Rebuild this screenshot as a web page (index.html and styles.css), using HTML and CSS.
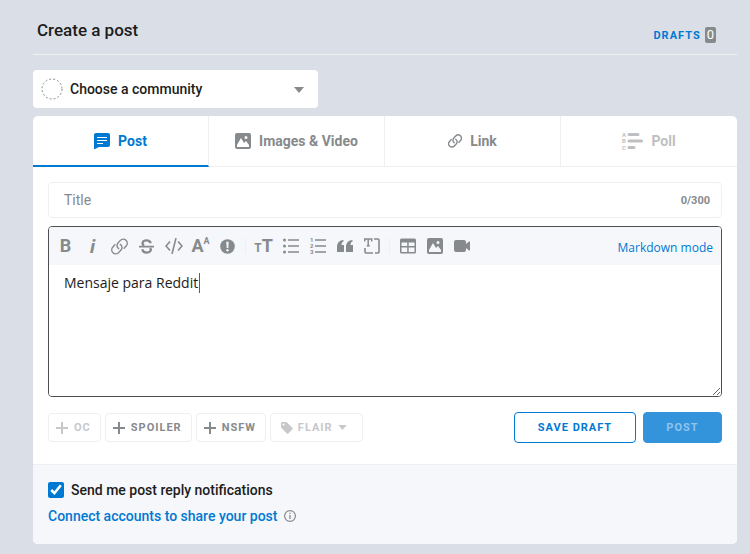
FILE: index.html
```html
<!DOCTYPE html>
<html lang="en">
<head>
    <meta charset="UTF-8">
    <meta name="viewport" content="width=device-width, initial-scale=1.0">
    <title>Create a post</title>
    <link rel="stylesheet" href="styles.css">
</head>
<body>

    <header class="header">
        <h1>Create a post</h1>
        <button class="drafts">DRAFTS <span class="count">0</span></button>
    </header>

    <div class="community">
        <svg class="community-icon" width="22" height="22" viewBox="0 0 22 22"><circle cx="11" cy="11" r="10" fill="none" stroke="#878a8c" stroke-dasharray="2 2"/></svg>
        <select aria-label="Choose a community">
            <option>Choose a community</option>
        </select>
        <svg class="arrow" width="10" height="6" viewBox="0 0 10 6"><path d="M0 0h10L5 6z"/></svg>
    </div>

    <main class="card">
        <nav class="tabs">
            <button class="tab active">
                <svg width="16" height="16" viewBox="0 0 16 16"><path fill="currentColor" d="M2 0h12a2 2 0 0 1 2 2v10a2 2 0 0 1-2 2H5l-4 2H0V2a2 2 0 0 1 2-2z"/><path stroke="#fff" d="M3 4.5h10M3 7.5h10M3 10.5h6"/></svg>
                Post
            </button>
            <button class="tab">
                <svg width="16" height="16" viewBox="0 0 16 16"><path fill="currentColor" fill-rule="evenodd" d="M2 0h12a2 2 0 0 1 2 2v12a2 2 0 0 1-2 2H2a2 2 0 0 1-2-2V2a2 2 0 0 1 2-2zM2 14h12v-2l-3-4-2 2-3-5-4 7zM11 3a1.5 1.5 0 1 0 0 3 1.5 1.5 0 0 0 0-3z"/></svg>
                Images &amp; Video
            </button>
            <button class="tab">
                <svg width="14" height="14" viewBox="0 0 20 20" fill="none" stroke="currentColor" stroke-width="2" stroke-linecap="round"><path d="M9 12.5C6.5 11 6.5 7.5 8.5 5.5l2.5-2.7a4.7 4.7 0 0 1 6.8 6.5L15.5 12"/><path d="M11 7.5c2.5 1.5 2.5 5 .5 7L9 17.2a4.7 4.7 0 0 1-6.8-6.5L4.5 8"/></svg>
                Link
            </button>
            <button class="tab" disabled>
                <svg width="21" height="18" viewBox="0 0 21 18"><path stroke="currentColor" stroke-width="3" stroke-linecap="round" d="M7 2.5h9M7 9h12.5M7 15.5h5"/><g fill="currentColor" class="tiny"><text x="0" y="5">A</text><text x="0" y="11">B</text><text x="0" y="18">C</text></g></svg>
                Poll
            </button>
        </nav>

        <div class="content">
            <div class="title-box">
                <input type="text" id="title" placeholder="Title" aria-label="Title" maxlength="300">
                <span class="counter" id="counter">0/300</span>
            </div>

            <div class="editor">
                <div class="toolbar">
                    <button class="tool" aria-label="Bold"><b>B</b></button>
                    <button class="tool italic" aria-label="Italics"><b>i</b></button>
                    <button class="tool" aria-label="Link"><svg width="17" height="17" viewBox="0 0 20 20" fill="none" stroke="currentColor" stroke-width="1.7" stroke-linecap="round"><path d="M9 12.5C6.5 11 6.5 7.5 8.5 5.5l2.5-2.7a4.7 4.7 0 0 1 6.8 6.5L15.5 12"/><path d="M11 7.5c2.5 1.5 2.5 5 .5 7L9 17.2a4.7 4.7 0 0 1-6.8-6.5L4.5 8"/></svg></button>
                    <button class="tool" aria-label="Strikethrough"><svg width="15" height="15" viewBox="0 0 16 16" fill="none" stroke="currentColor" stroke-width="2.4"><path d="M12.5 4.5C12 2.5 10.5 1.5 8 1.5c-4.5 0-5.5 4-2.5 5.5M3.5 11c.5 2.5 2 3.5 4.5 3.5 4 0 5.5-2.5 4-5"/><path d="M0 8.2h16" stroke-width="1.8"/></svg></button>
                    <button class="tool" aria-label="Inline code"><svg width="18" height="16" viewBox="0 0 18 16" fill="none" stroke="currentColor" stroke-width="1.6"><path d="M5 3.5L1 8l4 4.5M13 3.5L17 8l-4 4.5M11 0L7 16"/></svg></button>
                    <button class="tool" aria-label="Superscript"><b>A</b><span class="raised">A</span></button>
                    <button class="tool" aria-label="Spoiler"><svg width="15" height="15" viewBox="0 0 15 15"><circle cx="7.5" cy="7.5" r="7.3" fill="currentColor"/><path fill="#f5f7fa" d="M6.3 2.8h2.4L8.3 9H6.7z"/><circle cx="7.5" cy="11.3" r="1.2" fill="#f5f7fa"/></svg></button>
                    <span class="separator"></span>
                    <button class="tool" aria-label="Heading"><b class="small-t">T</b><b>T</b></button>
                    <button class="tool" aria-label="Bulleted list"><svg width="16" height="16" viewBox="0 0 16 16"><path stroke="currentColor" stroke-width="1.5" d="M5 2h11M5 8h11M5 14h11"/><g fill="currentColor"><circle cx="1.5" cy="2" r="1.5"/><circle cx="1.5" cy="8" r="1.5"/><circle cx="1.5" cy="14" r="1.5"/></g></svg></button>
                    <button class="tool" aria-label="Numbered list"><svg width="16" height="18" viewBox="0 0 16 18"><path stroke="currentColor" stroke-width="1.5" d="M5 3h11M5 9h11M5 15h11"/><g fill="currentColor" class="tiny"><text x="0" y="5">1</text><text x="0" y="11">2</text><text x="0" y="17">3</text></g></svg></button>
                    <button class="tool" aria-label="Quote block"><svg width="16" height="12" viewBox="0 0 16 12"><g fill="currentColor"><path d="M6.5 0v1.5C5 2 4.5 3.5 4.5 5H7v7H0V7c0-4 2.5-7 6.5-7z"/><path d="M15.5 0v1.5C14 2 13.5 3.5 13.5 5H16v7H9V7c0-4 2.5-7 6.5-7z"/></g></svg></button>
                    <button class="tool" aria-label="Code block"><svg width="16" height="16" viewBox="0 0 16 16" fill="none" stroke="currentColor"><path stroke-width="1.6" d="M10 1h4a1 1 0 0 1 1 1v12a1 1 0 0 1-1 1h-3M9 15H2a1 1 0 0 1-1-1v-4"/><path stroke-width="1.5" d="M.7 3.5V1h7v2.5M4.2 1v7M2.7 7.7h3"/></svg></button>
                    <span class="separator"></span>
                    <button class="tool" aria-label="Table"><svg width="16" height="16" viewBox="0 0 16 16"><path fill="currentColor" fill-rule="evenodd" d="M1.5.5h13A1.5 1.5 0 0 1 16 2v12a1.5 1.5 0 0 1-1.5 1.5h-13A1.5 1.5 0 0 1 0 14V2A1.5 1.5 0 0 1 1.5.5zM1.5 4.5V8h5.700V4.5zm7.2 0V8h5.800V4.5zM1.5 9.5V14h5.700V9.5zm7.2 0V14h5.800V9.5z"/></svg></button>
                    <button class="tool" aria-label="Add an image"><svg width="16" height="16" viewBox="0 0 16 16"><path fill="currentColor" fill-rule="evenodd" d="M2 0h12a2 2 0 0 1 2 2v12a2 2 0 0 1-2 2H2a2 2 0 0 1-2-2V2a2 2 0 0 1 2-2zM2 14h12v-2l-3-4-2 2-3-5-4 7zM11 3a1.5 1.5 0 1 0 0 3 1.5 1.5 0 0 0 0-3z"/></svg></button>
                    <button class="tool" aria-label="Add a video"><svg width="16" height="12" viewBox="0 0 16 12"><path fill="currentColor" d="M2 0h8a2 2 0 0 1 2 2v2l3-2.5h1v9h-1L12 8v2a2 2 0 0 1-2 2H2a2 2 0 0 1-2-2V2a2 2 0 0 1 2-2z"/></svg></button>
                    <button class="markdown">Markdown mode</button>
                </div>
                <div class="message">
                    <textarea id="message" aria-label="Text" spellcheck="false">Mensaje para Reddit</textarea>
                    <span class="caret"></span>
                </div>
            </div>

            <div class="actions">
                <button class="flag" disabled><svg width="12" height="12" viewBox="0 0 12 12"><path d="M6 0v12M0 6h12"/></svg>OC</button>
                <button class="flag"><svg width="12" height="12" viewBox="0 0 12 12"><path d="M6 0v12M0 6h12"/></svg>SPOILER</button>
                <button class="flag"><svg width="12" height="12" viewBox="0 0 12 12"><path d="M6 0v12M0 6h12"/></svg>NSFW</button>
                <button class="flag flair" disabled>
                    <svg width="12" height="12" viewBox="0 0 12 12"><path class="solid" fill-rule="evenodd" d="M1 0h4.5L11.5 6a1 1 0 0 1 0 1.2L7.2 11.5a1 1 0 0 1-1.2 0L0 5.5V1a1 1 0 0 1 1-1zM2.5 1.5a1 1 0 1 0 0 2 1 1 0 0 0 0-2z"/></svg>FLAIR
                    <svg width="9" height="5" viewBox="0 0 10 6"><path class="solid" d="M0 0h10L5 6z"/></svg>
                </button>
                <button class="save">SAVE DRAFT</button>
                <button class="post" disabled>POST</button>
            </div>
        </div>

        <footer class="footer">
            <label class="notify"><input type="checkbox" checked>Send me post reply notifications</label>
            <div class="connect">
                <a href="#">Connect accounts to share your post</a>
                <svg width="12" height="12" viewBox="0 0 12 12"><circle cx="6" cy="6" r="5.4" fill="none" stroke="#878a8c" stroke-width="1.2"/><path stroke="#878a8c" stroke-width="1.3" d="M6 5v4M6 2.7V4"/></svg>
            </div>
        </footer>
    </main>

    <script>
        let title = document.getElementById("title");

        title.addEventListener("input", function () {
            document.getElementById("counter").textContent = title.value.length + "/300";
        });
    </script>

</body>
</html>
```
FILE: styles.css
```css
* { box-sizing: border-box; }
body { margin: 0; padding: 8px 13px 10px 33px; background: #dadfe7; color: #1c1c1c; font-family: Roboto, "Noto Sans", sans-serif; font-size: 14px; }
button { font-family: inherit; padding: 0; border: none; background: none; color: #878a8c; cursor: pointer; }
button:disabled { cursor: not-allowed; }
svg { display: block; flex: none; }

.header { display: flex; align-items: center; justify-content: space-between; height: 47px; padding: 0 21px 2px 4px; border-bottom: 1px solid #edeff1; }
.header h1 { margin: 0; font-size: 17px; font-weight: 500; }
.drafts { display: flex; align-items: center; gap: 4px; padding-top: 10px; color: #0079d3; font-size: 11px; font-weight: 700; letter-spacing: 1px; }
.count { padding: 0 2px; border-radius: 2px; background: #878a8c; color: #fff; font-size: 13px; line-height: 16px; font-weight: 400; letter-spacing: 0; }

.community { position: relative; width: 285px; max-width: 100%; margin: 15px 0 8px; }
.community select { display: block; width: 100%; height: 38px; padding: 0 37px; border: none; border-radius: 4px; background: #fff; color: #1c1c1c; appearance: none; font-family: inherit; font-size: 14px; font-weight: 500; }
.community-icon { position: absolute; left: 8px; top: 8px; }
.arrow { position: absolute; right: 14px; top: 17px; fill: #878a8c; }

.card { border-radius: 5px; background: #fff; overflow: hidden; }
.tabs { display: grid; grid-template-columns: repeat(4, 1fr); }
.tab { display: flex; align-items: center; justify-content: center; gap: 8px; height: 51px; border-right: 1px solid #edeff1; border-bottom: 1px solid #edeff1; font-size: 14px; font-weight: 700; }
.tab:last-child { border-right: none; }
.tab.active { border-bottom: 2px solid #0079d3; color: #0079d3; }
.tab:disabled { color: #bebfc1; }
.tiny { font-size: 6px; font-weight: 700; }

.content { padding: 15px 15px 21px; }
.title-box { display: flex; align-items: center; height: 36px; padding: 0 11px 0 15px; border: 1px solid #edeff1; border-radius: 4px; }
.title-box input { flex: 1; min-width: 0; padding: 0; border: none; outline: none; background: none; font-family: inherit; font-size: 14px; }
.title-box input::placeholder { color: #878a8c; }
.counter { color: #878a8c; font-size: 11px; font-weight: 700; }

.editor { margin: 8px 0 15px; border: 1px solid #4c4e50; border-radius: 4px; overflow: hidden; }
.toolbar { display: flex; align-items: center; height: 38px; padding: 0 8px 0 3px; background: #f5f7fa; }
.tool { display: flex; align-items: center; justify-content: center; flex: none; width: 27px; height: 30px; font-size: 18px; line-height: 20px; }
.italic { font-style: italic; font-family: "Noto Sans", sans-serif; }
.raised { align-self: flex-start; font-size: 9px; line-height: 20px; font-weight: 700; }
.small-t { font-size: 12px; padding-top: 4px; }
.separator { width: 1px; height: 16px; margin: 0 4px; background: #edeff1; }
.markdown { margin-left: auto; padding-top: 3px; color: #0079d3; font-family: "Open Sans", sans-serif; font-size: 12px; white-space: nowrap; }
.message { position: relative; }
.message textarea { display: block; width: 100%; height: 131px; padding: 7px 15px; border: none; outline: none; background: #fff; color: #1c1c1c; font-family: "Open Sans", sans-serif; font-size: 14px; line-height: 21px; resize: vertical; }
.caret { position: absolute; left: 150px; top: 8px; width: 1px; height: 20px; background: #0079d3; }

.actions { display: flex; align-items: center; gap: 4px; }
.flag { display: flex; align-items: center; gap: 6px; height: 29px; padding: 0 9px 0 7px; border: 1px solid #edeff1; border-radius: 4px; font-size: 11px; font-weight: 700; letter-spacing: 1px; }
.flag svg { fill: none; stroke: currentColor; stroke-width: 2; }
.flag .solid { fill: currentColor; stroke: none; }
.flag:disabled { color: #c6c8ca; }
.flair { gap: 5px; padding: 0 15px 0 10px; }
.save, .post { height: 31px; border: 1px solid #0079d3; border-radius: 4px; font-size: 11px; font-weight: 700; letter-spacing: 1px; white-space: nowrap; }
.save { width: 122px; margin-left: auto; color: #0079d3; }
.post { width: 79px; margin-left: 3px; border-color: #3394dc; background: #3394dc; color: #8ec4ee; }

.footer { padding: 15px 15px 18px; border-top: 1px solid #edeff1; background: #f5f7fa; font-weight: 500; }
.notify { display: flex; align-items: center; gap: 7px; line-height: 20px; }
.notify input { width: 16px; height: 16px; margin: 0; accent-color: #0079d3; }
.connect { display: flex; align-items: center; gap: 6px; margin-top: 6px; line-height: 20px; }
.connect a { color: #0079d3; text-decoration: none; }
```
